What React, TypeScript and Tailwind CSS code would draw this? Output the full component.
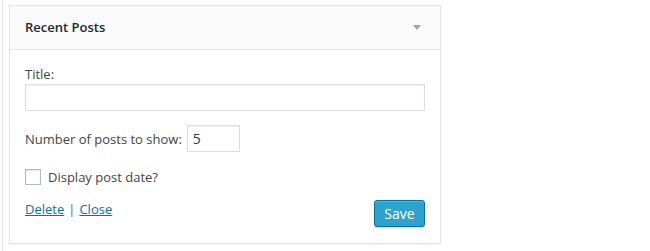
export default function App() {
  return (
    <div className="flex h-[251px] w-[650px] bg-white font-['Open_Sans',sans-serif] text-[13px] text-[#444]">
      <div className="ml-[2px] w-px bg-[#e5e5e5]" />
      <div className="ml-[6px] mt-[5px] self-start">
        <div className="w-[432px] border border-[#e5e5e5] bg-white shadow-[0_1px_1px_rgba(0,0,0,0.04)]">
          {/* widget header */}
          <div className="flex h-[44px] items-center justify-between border-b border-[#e5e5e5] bg-[#fafafa] pl-[15px] pr-[19px]">
            <h3 className="text-[13px] font-semibold text-[#23282d]">Recent Posts</h3>
            <svg width="8" height="5" viewBox="0 0 8 5">
              <path d="M0 0h8L4 5z" fill="#a0a5aa" />
            </svg>
          </div>

          {/* widget form */}
          <div className="px-[15px] pb-[16px] pt-[15px]">
            <label className="block leading-[18px]">Title:</label>
            <input
              type="text"
              className="mt-px block h-[27px] w-[400px] border border-[#ddd] bg-white px-[5px] shadow-[inset_0_1px_2px_rgba(0,0,0,0.07)] outline-none"
            />

            <div className="mt-[14px] flex items-center">
              <label className="leading-[18px]">Number of posts to show:</label>
              <input
                type="text"
                defaultValue="5"
                className="ml-[5px] h-[27px] w-[53px] border border-[#ddd] bg-white px-[5px] text-[14px] text-[#32373c] shadow-[inset_0_1px_2px_rgba(0,0,0,0.07)] outline-none"
              />
            </div>

            <div className="mt-[16px] flex items-center">
              <span className="h-[16px] w-[16px] border border-[#b4b9be] bg-white shadow-[inset_0_1px_2px_rgba(0,0,0,0.1)]" />
              <label className="ml-[7px] leading-[18px]">Display post date?</label>
            </div>

            <div className="mt-[14px] flex items-start justify-between">
              <div className="leading-[18px]">
                <a href="#" className="text-[#0073aa] underline">Delete</a>
                <span className="mx-[4px] text-[#666]">|</span>
                <a href="#" className="text-[#0073aa] underline">Close</a>
              </div>
              <button className="h-[27px] w-[51px] rounded-[3px] border border-[#0074a2] bg-[#2ea2cc] text-[14px] leading-[25px] text-white shadow-[inset_0_1px_0_rgba(120,200,230,0.5),0_1px_0_rgba(0,0,0,0.15)]">
                Save
              </button>
            </div>
          </div>
        </div>
      </div>
    </div>
  )
}
